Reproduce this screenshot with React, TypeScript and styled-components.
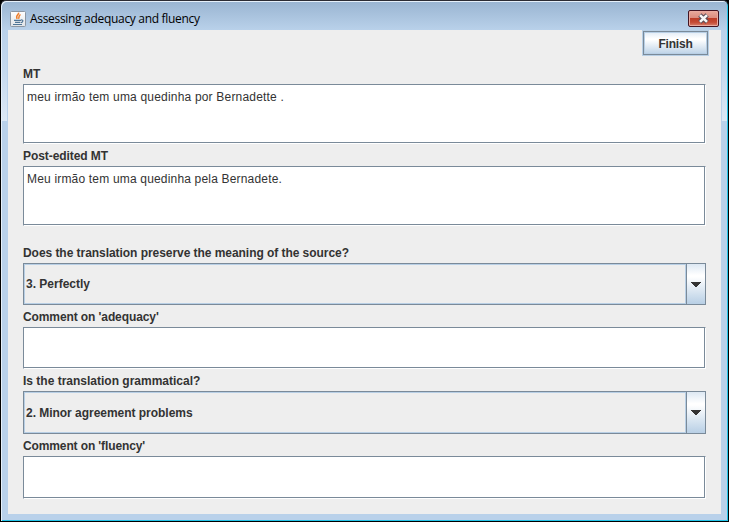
import React from "react";
import styled, { createGlobalStyle } from "styled-components";

const Global = createGlobalStyle`
  * { box-sizing: border-box; }
  body { margin: 0; background: #000; overflow: hidden; }
`;

const Frame = styled.div`
  width: 729px;
  height: 522px;
  display: flex;
  flex-direction: column;
  border: 1px solid #000;
  border-top-color: #2b2b33;
  border-radius: 6px 6px 0 0;
  padding: 0 6px 7px;
  box-shadow: inset 1px 1px 0 #e6f0fa, inset -1px -1px 0 #22c4e8;
  background:
    linear-gradient(#b9d1ea, #c5d9ee 45%, #dce8f5) 0 29px / 6px 91px no-repeat,
    linear-gradient(#b9d1ea, #c5d9ee 45%, #dce8f5) 100% 29px / 6px 91px no-repeat,
    linear-gradient(#99b4d1, #b9d1ea) 0 0 / 100% 29px no-repeat,
    #b9d1ea;
`;

const TitleBar = styled.header`
  height: 29px;
  flex: none;
  display: flex;
  align-items: flex-start;
  padding: 9px 3px 0 3px;
`;

const Title = styled.h1`
  flex: 1;
  margin: -1px 0 0 4px;
  font: 400 12px/20px "Open Sans", "Noto Sans", sans-serif;
  letter-spacing: -0.31px;
  color: #000;
  white-space: nowrap;
`;

const CloseButton = styled.button`
  width: 31px;
  height: 17px;
  padding: 0;
  display: grid;
  place-items: center;
  border: 1px solid #431422;
  border-radius: 2px;
  box-shadow: inset 0 0 0 1px #e9aaa0;
  background: linear-gradient(#e9a99c, #dc8d80 45%, #bd3d28 50%, #c44a35 75%, #d9816f);
`;

const Content = styled.main`
  flex: 1;
  margin: 0 1px;
  display: flex;
  flex-direction: column;
  background: #eee;
  color: #333;
  font: 12px/22px "Liberation Sans", Arial, sans-serif;
`;

const Toolbar = styled.div`
  height: 32px;
  display: flex;
  justify-content: flex-end;
  padding: 0 12px 0 0;
`;

const FinishButton = styled.button<{ $spacing: number }>`
  width: 67px;
  height: 26px;
  padding: 2px 0 0;
  border: 1px solid #b8cfe5;
  box-shadow: inset 0 0 0 1px #7a8a99, inset 0 0 0 2px #b8cfe5;
  background: linear-gradient(#dde8f3, #fff 32%, #fff 36%, #b8cfe5);
  font: bold 12px/22px "Liberation Sans", Arial, sans-serif;
  letter-spacing: ${(p) => p.$spacing}px;
  color: #333;
`;

const Form = styled.form`
  display: flex;
  flex-direction: column;
  padding: 0 15px;
`;

const Label = styled.label<{ $spacing: number }>`
  height: 22px;
  padding-top: 1px;
  font-weight: bold;
  white-space: nowrap;
  letter-spacing: ${(p) => p.$spacing}px;
`;

const Gap = styled.div`
  height: 15px;
`;

const TextBox = styled.div<{ $height: number; $spacing?: number }>`
  width: 683px;
  height: ${(p) => p.$height}px;
  padding: 1px 3px;
  border: 1px solid #fff;
  border-top-color: #7a8a99;
  border-left-color: #7a8a99;
  box-shadow: inset -1px -1px 0 #7a8a99;
  background: #fff;
  letter-spacing: ${(p) => p.$spacing ?? 0}px;
  white-space: nowrap;
`;

const Combo = styled.div<{ $height: number }>`
  width: 683px;
  height: ${(p) => p.$height}px;
  display: flex;
  border: 1px solid #7a8a99;
`;

const ComboValue = styled.span<{ $spacing: number }>`
  flex: 1;
  display: flex;
  align-items: center;
  padding-left: 1px;
  border: 1px solid #b8cfe5;
  font-weight: bold;
  letter-spacing: ${(p) => p.$spacing}px;
`;

const ComboArrow = styled.span`
  width: 19px;
  display: grid;
  place-items: center;
  border-left: 1px solid #7a8a99;
  background: linear-gradient(#dde8f3, #fff 28%, #fff 32%, #b8cfe5);
`;

const IconSlot = styled.span`
  display: flex;
  padding-top: 1px;
`;

const JavaIcon = () => (
  <svg width="16" height="16" viewBox="0 0 16 16">
    <defs>
      <linearGradient id="tile" x2="0" y2="1">
        <stop stopColor="#fff" />
        <stop offset="1" stopColor="#dfe3e7" />
      </linearGradient>
    </defs>
    <rect x=".5" y=".5" width="15" height="15" rx="1" fill="url(#tile)" stroke="#8c96a2" />
    <path d="M8.6 1.6C9.2 3.8 5 4.4 7.2 7.8M10.6 3.6C8 4.6 9.8 5.8 8.4 7.8" fill="none" stroke="#ee7f2d" strokeWidth="1.5" />
    <path d="M4 9.3h7M5 11.3h5.4M3 13.5h9M11 9c2.8-.4 2.2 2.2 0 2.7" fill="none" stroke="#4f7596" strokeWidth="1.2" />
  </svg>
);

const CloseIcon = () => (
  <svg width="13" height="11" viewBox="0 0 13 11">
    <path d="M2.8 2l7.4 7M10.2 2L2.8 9" stroke="#5c4d57" strokeWidth="4.6" />
    <path d="M3 2.1l7 6.8M10 2.1L3 8.9" stroke="#f7f7f7" strokeWidth="2.6" />
  </svg>
);

const ArrowIcon = () => (
  <svg width="10" height="5" viewBox="0 0 10 5" shapeRendering="crispEdges">
    <path d="M0 0h10v1H9v1H8v1H7v1H6v1H4V4H3V3H2V2H1V1H0z" fill="#333" />
  </svg>
);

interface SelectProps {
  height: number;
  value: string;
  spacing: number;
}

const Select = ({ height, value, spacing }: SelectProps) => (
  <Combo $height={height}>
    <ComboValue $spacing={spacing}>{value}</ComboValue>
    <ComboArrow><ArrowIcon /></ComboArrow>
  </Combo>
);

export default function App() {
  return (
    <>
      <Global />
      <Frame>
        <TitleBar>
          <IconSlot><JavaIcon /></IconSlot>
          <Title>Assessing adequacy and fluency</Title>
          <CloseButton aria-label="Close"><CloseIcon /></CloseButton>
        </TitleBar>
        <Content>
          <Toolbar>
            <FinishButton $spacing={-0.2}>Finish</FinishButton>
          </Toolbar>
          <Form>
            <Label $spacing={0}>MT</Label>
            <TextBox $height={60} $spacing={0.19}>meu irmão tem uma quedinha por Bernadette .</TextBox>
            <Label $spacing={-0.07}>Post-edited MT</Label>
            <TextBox $height={60} $spacing={0.18}>Meu irmão tem uma quedinha pela Bernadete.</TextBox>
            <Gap />
            <Label $spacing={-0.05}>Does the translation preserve the meaning of the source?</Label>
            <Select height={42} value="3. Perfectly" spacing={0} />
            <Label $spacing={-0.1}>Comment on 'adequacy'</Label>
            <TextBox $height={42} />
            <Label $spacing={0}>Is the translation grammatical?</Label>
            <Select height={43} value="2. Minor agreement problems" spacing={-0.03} />
            <Label $spacing={-0.12}>Comment on 'fluency'</Label>
            <TextBox $height={43} />
          </Form>
        </Content>
      </Frame>
    </>
  );
}
